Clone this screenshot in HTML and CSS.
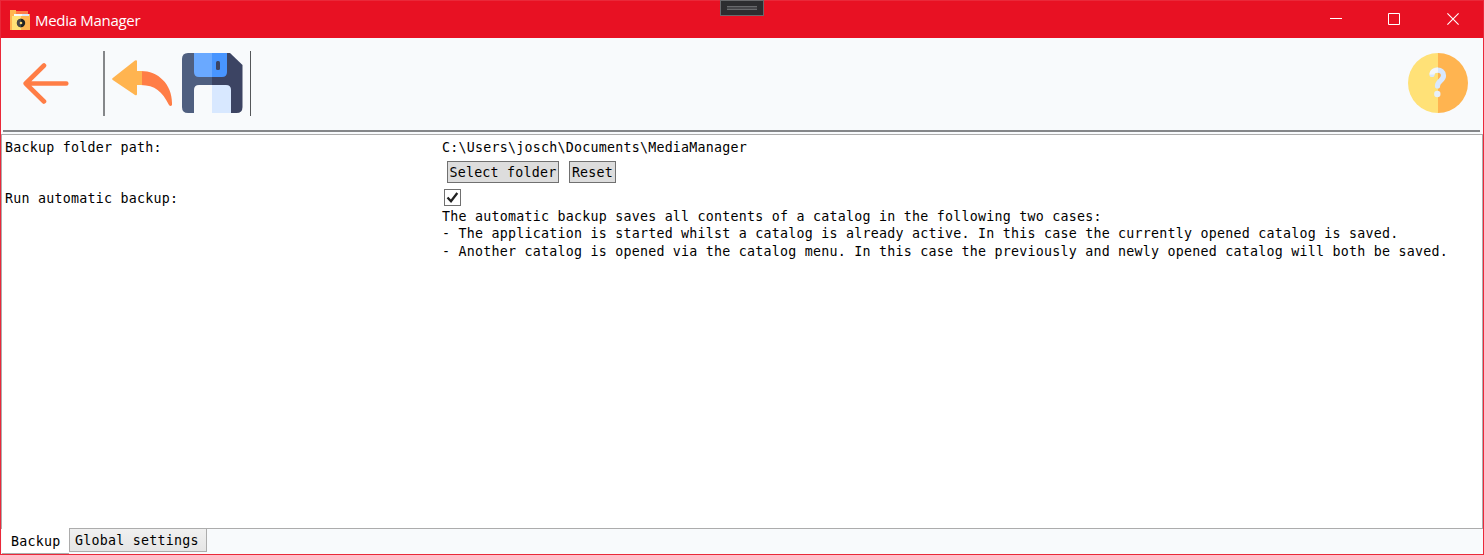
FILE: index.html
```html
<!DOCTYPE html>
<html lang="en">
<head>
<meta charset="utf-8">
<title>Media Manager</title>
<link rel="stylesheet" href="styles.css">
</head>
<body>
<div class="window">
  <header class="titlebar">
    <svg class="app-icon" width="20" height="20" viewBox="0 0 20 20">
      <path fill="#ffb450" d="M0 0h6v4h14v16H0z"/>
      <path fill="#ff7d46" d="M6 1h12v4H6z"/>
      <path fill="#f8fafc" d="M4 4h8v3H4z"/><path fill="#d8e8ff" d="M12 4h7v3h-7z"/>
      <path fill="#ffe177" d="M2 6h9v14H2z"/><path fill="#ffb450" d="M11 6h9v14h-9z"/>
      <circle cx="11" cy="13" r="4.2" fill="#222"/>
      <path d="M11 8.8a4.2 4.2 0 0 0 0 8.4z" fill="#494949"/>
      <circle cx="11" cy="13" r="1.3" fill="#ffd56a"/>
    </svg>
    <h1 class="title">Media Manager</h1>
    <div class="grip"><i class="grip-lines"></i></div>
    <div class="controls">
      <svg width="12" height="12" viewBox="0 0 12 12"><path class="crisp" d="M0 5.5h12"/></svg>
      <svg width="12" height="12" viewBox="0 0 12 12"><path class="crisp" d="M.5.5h11v11H.5z"/></svg>
      <svg width="12" height="12" viewBox="0 0 12 12"><path d="M.4.4l11.2 11.2M11.6.4.4 11.6"/></svg>
    </div>
  </header>

  <nav class="toolbar">
    <svg class="back" width="46" height="42" viewBox="0 0 46 42">
      <path d="M21 2.500 2.700 20.500 21 38.500M2.700 20.500H43.300" fill="none" stroke="#ff7d46" stroke-width="4.600" stroke-linecap="round" stroke-linejoin="round"/>
    </svg>
    <i class="divider"></i>
    <svg class="undo" width="60" height="60" viewBox="0 0 60 60">
      <path fill="#ff7d46" d="M29 18C46 18 60 31 60 50v2q-1.500 2-3 0C50 38 43 32.500 29 32z"/>
      <path fill="#ffb450" d="M23 7.500q2-1 2 1V18h5v14h-5v9q0 2-2 1L.8 27q-1.300-1 0-2z"/>
    </svg>
    <svg class="save" width="61" height="60" viewBox="0 0 61 60">
      <path fill="#4f5f80" d="M6 0h24v60H6q-6 0-6-6V6q0-6 6-6z"/>
      <path fill="#3c4463" d="M30 0h18l12.500 12v42q0 6-6 6H30z"/>
      <path fill="#6aa9ff" d="M12 0h18v24H17q-5 0-5-5z"/>
      <path fill="#4895ff" d="M30 0h15v19q0 5-5 5H30z"/>
      <rect x="34" y="8" width="4" height="9" rx="1.500" fill="#3c4463"/>
      <path fill="#f8fafc" d="M12 60V37q0-5 5-5h13v28z"/>
      <path fill="#d8e8ff" d="M30 32h14q5 0 5 5v23H30z"/>
    </svg>
    <i class="divider divider-end"></i>
    <svg class="help" width="60" height="60" viewBox="0 0 60 60">
      <path fill="#ffe177" d="M30 0a30 30 0 0 0 0 60z"/><path fill="#ffb450" d="M30 0a30 30 0 0 1 0 60z"/>
      <path d="M24 21.500C24 15.500 35.500 15.500 35.500 22.500C35.500 28 29.500 27.500 29.500 33" fill="none" stroke="#d8e8ff" stroke-width="5.200" stroke-linecap="round"/>
      <path d="M24 21.500C24 18.500 27 17 30 17" fill="none" stroke="#f4f7fb" stroke-width="5.200"/>
      <circle cx="29.300" cy="41" r="3.200" fill="#e6effb"/>
    </svg>
  </nav>

  <main class="panel">
    <div class="label">Backup folder path:</div>
    <div class="value">
      <div class="path">C:\Users\josch\Documents\MediaManager</div>
      <div class="buttons"><button class="btn select">Select folder</button><button class="btn reset">Reset</button></div>
    </div>
    <div class="label">Run automatic backup:</div>
    <div class="value">
      <div class="checkbox"><svg width="15" height="15" viewBox="0 0 15 15"><path d="M2.500 7.500 6 11.200 12.300 3" fill="none" stroke="#212121" stroke-width="2.300"/></svg></div>
      <p class="description">The automatic backup saves all contents of a catalog in the following two cases:<br>- The application is started whilst a catalog is already active. In this case the currently opened catalog is saved.<br>- Another catalog is opened via the catalog menu. In this case the previously and newly opened catalog will both be saved.</p>
    </div>
  </main>

  <footer class="tabs">
    <div class="tab active">Backup</div>
    <div class="tab">Global settings</div>
  </footer>
</div>
</body>
</html>
```
FILE: styles.css
```css
* { box-sizing: border-box; }
body { margin: 0; }
.window {
  position: relative;
  display: flex;
  flex-direction: column;
  width: 1484px;
  height: 555px;
  border: 1px solid #ea2839;
  background: #f8fafc;
  color: #000;
  font: 13.3px/18px "DejaVu Sans Mono", monospace;
  letter-spacing: .24px;
}
.titlebar {
  display: flex;
  align-items: center;
  flex: none;
  height: 37px;
  padding: 0 24px 0 9px;
  background: #e81123;
}
.app-icon { display: block; margin-top: 1px; }
.title {
  margin: 0 0 0 5px;
  color: #fff;
  font: 400 15px/20px "Open Sans", "Noto Sans", sans-serif;
  letter-spacing: -.3px;
}
.grip {
  position: absolute;
  left: 719px;
  top: -1px;
  width: 44px;
  height: 16px;
  padding: 6px;
  border: 1px solid #68696c;
  background: #2d2d30;
}
.grip-lines {
  display: block;
  height: 4px;
  margin: -1px 0;
  border: solid #68696c;
  border-width: 1px 0;
  background: #46464a;
}
.controls { display: flex; gap: 47px; margin: -1px 0 0 auto; }
.controls svg:first-child { margin: 0 -1px 0 1px; }
.controls path { fill: none; stroke: #fff; stroke-width: 1.1; }
.controls .crisp { stroke-width: 1; }
.toolbar {
  display: flex;
  align-items: flex-start;
  flex: none;
  height: 94px;
  margin: 0 3px 0 2px;
  padding: 15px 12px 0 20px;
  border-bottom: 2px solid #848689;
}
.back { margin-top: 10px; }
.divider { width: 2px; height: 65px; margin: -2px 7px 0 34px; background: #85878a; }
.divider-end { width: 1px; margin-left: 7px; background: #55575a; }
.save { margin-left: 10px; }
.help { margin-left: auto; }
.panel {
  display: grid;
  grid-template-columns: 438px 1fr;
  grid-template-rows: 51px 1fr;
  flex: none;
  height: 395px;
  margin-top: 2px;
  padding: 4px 2px 0 3px;
  border: 1px solid #acacac;
  background: #fff;
}
.label { white-space: nowrap; }
.value { white-space: nowrap; margin-left: -1px; }
.buttons { display: flex; gap: 10px; margin: 4px 0 0 5px; }
.btn {
  height: 22px;
  padding: 1px 0 0;
  border: 1px solid #707070;
  background: #ddd;
  color: #000;
  font: inherit;
  letter-spacing: inherit;
}
.select { width: 112px; }
.reset { width: 47px; }
.checkbox {
  width: 17px;
  height: 17px;
  margin: -1px 0 2px 2px;
  border: 1px solid #707070;
  background: #fff;
}
.checkbox svg { display: block; }
.description { margin: 0; line-height: 17.4px; }
.tabs { display: flex; flex: 1; align-items: flex-start; padding-left: 1px; }
.tab {
  height: 24px;
  margin-top: -1px;
  padding: 3px 7px 0 5px;
  border: 1px solid #acacac;
  background: linear-gradient(#f0f0f0, #e5e5e5);
}
.tab.active {
  height: 26px;
  width: 67px;
  padding: 5px 0 0 9px;
  border-width: 0 0 1px;
  background: #fff;
}
```
